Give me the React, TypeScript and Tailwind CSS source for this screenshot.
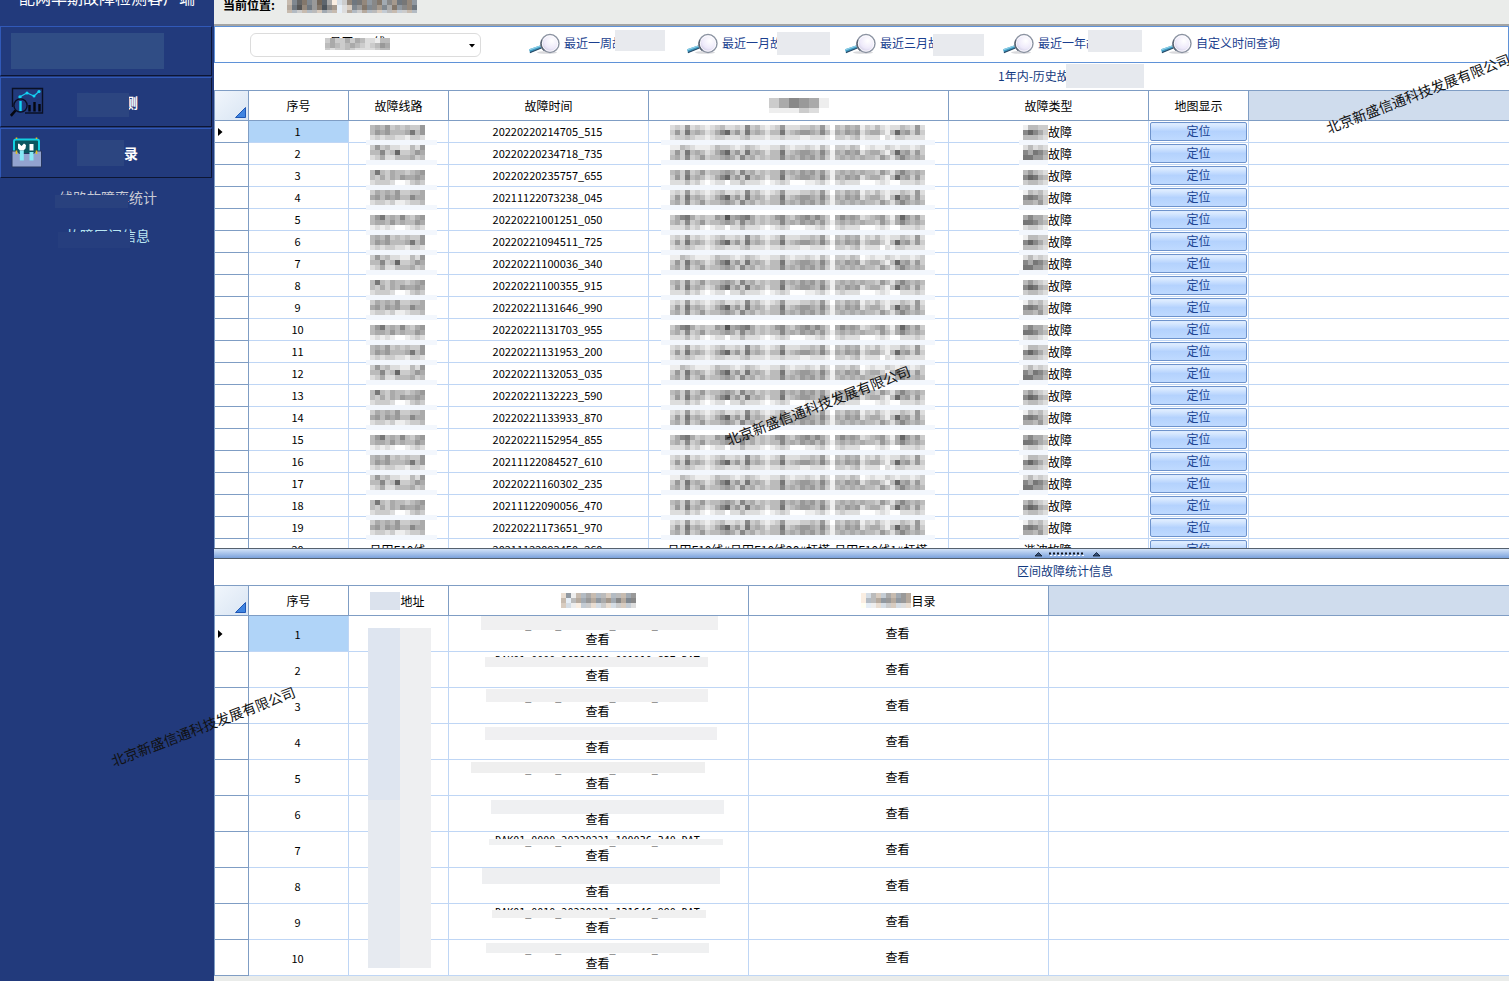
import React from "react";

/* ---------- pixelated redaction blocks ---------- */

type MosaicProps = {
  rows: string[];
  top?: number;
  height?: number;
  tint?: boolean;
  band?: [number, number];
};

function shade(level: number, col: number, tint?: boolean) {
  const v = level * 17;
  if (!tint) return `rgb(${v},${v},${v})`;
  const warm = col % 3 === 0 ? 12 : col % 3 === 1 ? -8 : 0;
  return `rgb(${Math.min(255, v + warm)},${v},${Math.min(255, v - warm)})`;
}

function Mosaic({ rows, top = 0, height = 15, tint, band }: MosaicProps) {
  const width = rows[0].length * 5;
  return (
    <svg
      width={width}
      height={height}
      className={band ? "block shrink-0 overflow-visible" : "block shrink-0 overflow-hidden"}
      shapeRendering="crispEdges"
      aria-hidden="true"
    >
      {band && <rect x={band[0]} y={top + 15} width={band[1]} height={5} fill="#f3f7fd" />}
      {rows.map((row, r) =>
        row.split("").map((c, i) => (
          <rect key={`${r}-${i}`} x={i * 5} y={top + r * 5} width={5} height={5} fill={shade(parseInt(c, 16), i, tint)} />
        ))
      )}
    </svg>
  );
}

const wideA = "dcd9dcdedcbddcd8cbdedc9dddccbc9dfbcabaecdbdeddbcd9d";
const wideB = "c9c7babdca86b9c7babdbb7cba99ab8beab9a9dbaaceb6a9c9c";
const wideC = "dccbcddedccdddcbdddeddcdddeedddefccdcbedddfdeccdddd";
const wideD = "eebcdeeedbccdedbcdeeddbdeddcdebdfccdbcfedeecdeddedc";
const wideE = "bac8cb9cbba9ac8bacbcbb8bab9a9b9cebabababbc9bda8abab";
const wideF = "dddbdcefeddfddbdddefedcdfffeedcefdcdddfffedeffdddcd";
const wideG = "ca87acbcc9a5a987acbcb98bca98a8acfa8a9adcba9cea69b9c";

const wideVariants = [
  [wideA, wideB, wideC],
  [wideD, wideB, wideE],
  [wideE, wideB, wideF],
  [wideA, wideB, wideE],
  [wideG, wideE, wideF],
];

const lineVariants = [
  ["bab9cbcbcc9", "b9a9bbba7b9", "dcdccddeccd"],
  ["c9cbddeebd9", "bb8cb6ccb9a", "dcaddbbbacb"],
  ["b7bcabbcba9", "bcacab9aa9a", "dcccdffecbc"],
  ["cabab9ccbba", "a9b9a9bb8aa", "dccdceedccb"],
  ["b97bab8bca9", "baab9babb9a", "ededeffedcd"],
];

const typeVariants = [
  ["ebbcc", "868ac", "bbbcd"],
  ["dbdcd", "8a78a", "7799b"],
  ["b9bcd", "867ab", "cbbcd"],
  ["ebcbd", "878ac", "aab9c"],
  ["a8aac", "778ab", "dccde"],
];

/* ---------- icons ---------- */

function Magnifier() {
  return (
    <svg width="31" height="21" viewBox="0 0 31 21" aria-hidden="true">
      <defs>
        <radialGradient id="lens" cx="0.6" cy="0.35" r="0.7">
          <stop offset="0" stopColor="#ffffff" />
          <stop offset="0.6" stopColor="#eeeafa" />
          <stop offset="1" stopColor="#c9c4de" />
        </radialGradient>
      </defs>
      <ellipse cx="18" cy="19.4" rx="10" ry="1.4" fill="#d9d9dc" />
      <path d="M0 16.2 L11 12.500 L12.500 15 L1 19.8 Z" fill="#3f9cc4" />
      <path d="M0 16.2 L11 12.500 L11.600 13.500 L0.500 17.500 Z" fill="#8fd0e8" />
      <path d="M0.800 19 L12.300 14.600 L12.500 15.400 L1 20.200 Z" fill="#2a4a66" />
      <path d="M11 12.500 L14 11.400 L15 13.600 L12.500 15 Z" fill="#b9c2cc" />
      <circle cx="21" cy="10.5" r="9" fill="url(#lens)" stroke="#8b93a1" strokeWidth="1.4" />
      <path d="M13 7 A9 9 0 0 0 15.400 17.500" fill="none" stroke="#5b6675" strokeWidth="1.6" />
      <circle cx="21" cy="10.5" r="7.7" fill="none" stroke="#ffffff" strokeWidth="0.8" />
    </svg>
  );
}

function ChartIcon() {
  return (
    <svg width="34" height="30" viewBox="0 0 34 30" fill="none" aria-hidden="true">
      <path d="M2.5 20 V1.5 H32.5 V26 H15" stroke="#0a1024" strokeWidth="1.4" />
      <path d="M9.5 10 L17 6 L24 9 L29.5 4" stroke="#17c8ee" strokeWidth="1.2" />
      <circle cx="10" cy="10" r="1.7" fill="#12d4f5" />
      <circle cx="17" cy="6" r="1.5" fill="#12d4f5" />
      <circle cx="24" cy="9" r="1.5" fill="#12d4f5" />
      <circle cx="29" cy="4.5" r="1.6" fill="#12d4f5" />
      <path d="M10.5 14 V24" stroke="#12d4f5" strokeWidth="2.4" />
      <circle cx="10.5" cy="18.5" r="6.6" stroke="#0a1024" strokeWidth="1.4" />
      <path d="M5.5 23.5 L0.8 28.8" stroke="#05070f" strokeWidth="2.6" />
      <path d="M19.5 18 V24.5 M24.5 15 V24.5 M29.5 17 V24.5" stroke="#05070f" strokeWidth="2.4" />
    </svg>
  );
}

function ToolboxIcon() {
  return (
    <svg width="32" height="32" viewBox="0 0 32 32" aria-hidden="true">
      <rect x="3" y="2.5" width="25" height="16" rx="2" fill="#0b5560" stroke="#12d0e0" strokeWidth="2" />
      <path d="M1 14 H6 L8 16.500 H23 L25 14 H30.5 V30 H1 Z" fill="#93a3cf" stroke="#26365f" strokeWidth="1" />
      <path d="M7 7 L8 6.500 L10.500 9 L13 6.500 L15 8 L14.500 11.500 L12.500 13.500 H9 L7 11.500 Z" fill="#ffffff" />
      <rect x="18.500" y="7" width="4" height="6.500" fill="#ffffff" />
      <path d="M10.800 13.500 V23.500 M20.500 15 V23.500" stroke="#86e8f6" strokeWidth="4" />
      <path d="M5.500 0.500 V2 M25.500 0.500 V2 M5.500 13.500 V17 M25.500 13.500 V17" stroke="#e0c020" strokeWidth="1.600" />
    </svg>
  );
}

function RowMarker() {
  return (
    <svg width="5" height="8" className="ml-[3px] block" aria-hidden="true">
      <path d="M0 0 L4.500 4 L0 8 Z" fill="#000" />
    </svg>
  );
}

/* ---------- grid pieces ---------- */

function HeadCell({ children }: { children?: React.ReactNode }) {
  return (
    <th className="h-[31px] border-y border-r border-[#7f9dc4] bg-white p-0 font-normal">
      <div className="flex items-center justify-center">{children}</div>
    </th>
  );
}

function CornerCell() {
  return (
    <td className="h-[31px] border border-[#7f9dc4] bg-linear-to-br from-[#f1f6fc] to-[#d9e5f3] p-0 align-bottom">
      <svg width="11" height="11" className="mr-[2px] mb-[2px] ml-auto block" aria-hidden="true">
        <path d="M10.500 0.500 V10.500 H0.500 Z" fill="#3f84e0" stroke="#1f57b5" />
      </svg>
    </td>
  );
}

const gutter = "border-x border-b border-[#7f9dc4] p-0";
const cell = "border-r border-b border-[#bfd6f5] p-0 pr-0.5";
const tail = "border-b border-[#bfd6f5] p-0";

const times = [
  "20220220214705_515", "20220220234718_735", "20220220235757_655", "20211122073238_045",
  "20220221001251_050", "20220221094511_725", "20220221100036_340", "20220221100355_915",
  "20220221131646_990", "20220221131703_955", "20220221131953_200", "20220221132053_035",
  "20220221132223_590", "20220221133933_870", "20220221152954_855", "20211122084527_610",
  "20220221160302_235", "20211122090056_470", "20220221173651_970", "20211122093450_260",
];

function HistoryTable() {
  return (
    <table className="w-full table-fixed border-separate border-spacing-0 text-center">
      <colgroup>
        <col className="w-[35px]" />
        <col className="w-[100px]" />
        <col className="w-[100px]" />
        <col className="w-[200px]" />
        <col className="w-[300px]" />
        <col className="w-[200px]" />
        <col className="w-[100px]" />
        <col />
      </colgroup>
      <thead>
        <tr>
          <CornerCell />
          <HeadCell>序号</HeadCell>
          <HeadCell>故障线路</HeadCell>
          <HeadCell>故障时间</HeadCell>
          <HeadCell>
            <Mosaic rows={["ccaa8899aaee", "ccaa8899aaee", "eeeeeeccddff"]} />
          </HeadCell>
          <HeadCell>故障类型</HeadCell>
          <HeadCell>地图显示</HeadCell>
          <td className="border-y border-[#7f9dc4] bg-[#cfdced] p-0" />
        </tr>
      </thead>
      <tbody>
        {times.map((time, i) => {
          const masked = i < 19;
          const top = Math.round((125 + 22 * i) / 5) * 5 - (121 + 22 * i);
          const v = i % 5;
          return (
            <tr key={time} className="h-[22px]">
              <td className={gutter}>{i === 0 && <RowMarker />}</td>
              <td className={i === 0 ? `${cell} bg-[#b0d4f8]` : cell}>
                <span className="block text-[11px] leading-[21px]">{i + 1}</span>
              </td>
              <td className={cell}>
                <div className="flex h-[21px] items-start justify-center leading-[21px]">
                  {masked ? <Mosaic rows={lineVariants[v]} top={top} height={21} band={[-4, 71]} /> : "吕田F10线"}
                </div>
              </td>
              <td className={cell}>
                <span className="block text-[11px] leading-[21px]">{time}</span>
              </td>
              <td className={cell}>
                <div className="flex h-[21px] items-start justify-center leading-[21px] whitespace-nowrap">
                  {masked ? (
                    <Mosaic rows={wideVariants[v]} top={top} height={21} band={[-9, 274]} />
                  ) : (
                    "吕田F10线#吕田F10线20#杆塔-吕田F10线1#杆塔"
                  )}
                </div>
              </td>
              <td className={cell}>
                <div className="flex h-[21px] items-start justify-center leading-[22px]">
                  {masked ? (
                    <>
                      <Mosaic rows={typeVariants[v]} top={top} height={21} band={[-4, 29]} />
                      故障
                    </>
                  ) : (
                    "谐波故障"
                  )}
                </div>
              </td>
              <td className="border-r border-b border-[#bfd6f5] px-px py-0">
                <button
                  type="button"
                  className="block h-[19px] w-full rounded-[2px] border border-[#6e93cc] bg-linear-to-b from-[#dcebff] from-10% via-[#b4d2fd] via-50% to-[#bfdaff] pb-0.5 leading-[15px] text-[#1c4595]"
                >
                  定位
                </button>
              </td>
              <td className={tail} />
            </tr>
          );
        })}
      </tbody>
    </table>
  );
}

type Section = { code: string; mask: string };

const sections: Section[] = [
  { code: "DAK01_0000_20220220_214705_515.DAT", mask: "left-[32px] top-0 w-[237px] h-[14px] bg-[#f0f0f1]" },
  { code: "DAK01_0000_20220220_001010_837.DAT", mask: "left-[36px] top-[5px] w-[223px] h-[10px] bg-[#f0f0f1]" },
  { code: "DAK01_0000_20220220_235757_655.DAT", mask: "left-[37px] top-px w-[222px] h-[13px] bg-[#f0f0f1]" },
  { code: "DAK01_0000_20211122_073238_045.DAT", mask: "left-[36px] top-[3px] w-[232px] h-[13px] bg-[#f0f0f2]" },
  { code: "DAK01_0000_20220221_001251_050.DAT", mask: "left-[22px] top-[2px] w-[234px] h-[11px] bg-[#efefef]" },
  { code: "DAK01_0000_20220221_094511_725.DAT", mask: "left-[42px] top-[4px] w-[233px] h-[14px] bg-[#eff0f2]" },
  { code: "DAK01_0000_20220221_100036_340.DAT", mask: "left-[40px] top-[7px] w-[234px] h-[6px] bg-[#f0f1f2]" },
  { code: "DAK01_0000_20220221_100355_915.DAT", mask: "left-[33px] top-0 w-[238px] h-[16px] bg-[#eeeff1]" },
  { code: "DAK01_0010_20220221_131646_990.DAT", mask: "left-[43px] top-[6px] w-[214px] h-[8px] bg-[#f0f0f0]" },
  { code: "DAK01_0000_20220221_131703_955.DAT", mask: "left-[37px] top-[3px] w-[223px] h-[10px] bg-[#eff0f1]" },
];

function SectionTable() {
  return (
    <div className="relative">
      <table className="w-full table-fixed border-separate border-spacing-0 text-center">
        <colgroup>
          <col className="w-[35px]" />
          <col className="w-[100px]" />
          <col className="w-[100px]" />
          <col className="w-[300px]" />
          <col className="w-[300px]" />
          <col />
        </colgroup>
        <thead>
          <tr>
            <CornerCell />
            <HeadCell>序号</HeadCell>
            <HeadCell>
              <span className="flex items-center pr-0.5">
                <span className="h-[18px] w-[30px] bg-[#dbe2ed]" />
                地址
              </span>
            </HeadCell>
            <HeadCell>
              <Mosaic tint rows={["d9ebbabbbcbbba9", "bebaa9a9a9a8a88", "cdeeccddcddcccd"]} />
            </HeadCell>
            <HeadCell>
              <Mosaic tint rows={["edbccaba9a", "ebba99a99a", "feeddccddd"]} />
              目录
            </HeadCell>
            <td className="border-y border-[#7f9dc4] bg-[#cfdced] p-0" />
          </tr>
        </thead>
        <tbody>
          {sections.map((s, i) => (
            <tr key={s.code} className="h-[36px]">
              <td className={gutter}>{i === 0 && <RowMarker />}</td>
              <td className={i === 0 ? `${cell} bg-[#b0d4f8]` : cell}>
                <span className="block text-[11px]">{i + 1}</span>
              </td>
              <td className={cell} />
              <td className={cell}>
                <div className="relative h-[35px] pt-[3px]">
                  <div className="font-['DejaVu_Sans_Mono',monospace] text-[10px] leading-[12px]">{s.code}</div>
                  <div className={`absolute ${s.mask}`} />
                  <a href="#wave" className="relative block leading-[16px]">查看</a>
                </div>
              </td>
              <td className={cell}>
                <a href="#dir" className="block pb-0.5">查看</a>
              </td>
              <td className={tail} />
            </tr>
          ))}
        </tbody>
      </table>
      <div className="absolute top-[43px] left-[154px] grid w-[63px] grid-cols-2 bg-[#eeeff1]">
        <div className="h-[172px] bg-[#dee5f0]" />
        <div />
        <div className="h-[168px] bg-[#e6eaf0]" />
        <div />
      </div>
    </div>
  );
}

/* ---------- toolbar ---------- */

const ranges = [
  { label: "最近一周故障", mask: "left-[86px] top-[-3px] w-[50px] h-[21px]" },
  { label: "最近一月故障", mask: "left-[90px] top-[-1px] w-[53px] h-[23px]" },
  { label: "最近三月故障", mask: "left-[88px] top-px w-[51px] h-[22px]" },
  { label: "最近一年故障", mask: "left-[85px] top-[-3px] w-[54px] h-[22px]" },
  { label: "自定义时间查询", mask: "" },
];

function Toolbar() {
  return (
    <div className="flex h-[37px] shrink-0 items-center border border-[#5f92d8] bg-white pl-[35px]">
      <div className="relative w-[231px]">
        <select
          aria-label="线路"
          className="block h-[24px] w-full appearance-none rounded-[6px] border border-[#dcdcdc] bg-white pr-4 pb-1.5 text-center text-[12px] leading-[16px]"
        >
          <option>吕田F10线</option>
        </select>
        <div className="pointer-events-none absolute top-[5px] left-[75px]">
          <Mosaic rows={["caccacabddebb", "babcbabcdcb9a", "cdccbcddddcbb"]} height={12} />
        </div>
        <svg width="6" height="4" className="pointer-events-none absolute top-[11px] right-[6px]" aria-hidden="true">
          <path d="M0 0 H6 L3 3.500 Z" fill="#000" />
        </svg>
      </div>
      <div className="mb-0.5 ml-12 flex">
        {ranges.map((r) => (
          <button
            key={r.label}
            type="button"
            className="relative flex w-[158px] items-center gap-1 whitespace-nowrap text-[#1b3f8f]"
          >
            <Magnifier />
            <span className="pb-0.5">{r.label}</span>
            {r.mask && <span className={`absolute bg-[#e8eaee] ${r.mask}`} />}
          </button>
        ))}
      </div>
    </div>
  );
}

function Splitter() {
  return (
    <div className="flex h-[11px] shrink-0 items-center border-y border-[#55616e] bg-linear-to-b from-[#d3e3f8] to-[#7ba2dc] pl-[821px]">
      <svg width="66" height="6" viewBox="0 0 66 6" aria-hidden="true">
        <path d="M0 5 L3.500 1.500 L7 5 Z M58 5 L61.500 1.500 L65 5 Z" fill="#33507c" stroke="#0b1422" strokeWidth="0.8" />
        <path d="M14 2.500 H49" stroke="#10151d" strokeWidth="2" strokeDasharray="2 2" />
        <path d="M15 4.500 H50" stroke="#ffffff" strokeWidth="1" strokeDasharray="2 2" />
      </svg>
    </div>
  );
}

/* ---------- sidebar ---------- */

const navBox =
  "relative flex h-[50px] w-[212px] items-center border border-t-[#3159b8] border-r-[#0d1634] border-b-[#0d1634] border-l-[#3159b8] pl-[9px] text-left";

function Sidebar() {
  return (
    <nav className="w-[214px] shrink-0 overflow-hidden bg-[#223a7c] text-[14px] text-white">
      <div className="h-[26px] overflow-hidden">
        <h1 className="-mt-3 text-center text-[16px] leading-[18px] font-normal">配网早期故障检测客户端</h1>
      </div>
      <div className="flex flex-col gap-px">
        <div className={navBox}>
          <div className="ml-px h-[36px] w-[153px] bg-[#304d85]" />
        </div>
        <button type="button" className={navBox}>
          <ChartIcon />
          <span className="ml-[38px] font-bold">故障监测</span>
          <span className="absolute top-[15px] left-[76px] h-[24px] w-[52px] bg-[#2c4580]" />
        </button>
        <button type="button" className={navBox}>
          <span className="pl-px">
            <ToolboxIcon />
          </span>
          <span className="ml-[39px] font-bold">故障记录</span>
          <span className="absolute top-[11px] left-[76px] h-[26px] w-[47px] bg-[#2c4580]" />
        </button>
      </div>
      <div className="flex flex-col items-center pl-0.5 leading-[38px]">
        <a href="#rate" className="relative text-[#c8cad4]">
          线路故障率统计
          <span className="absolute top-[17px] left-[-4px] h-[13px] w-[73px] bg-[#29417e]" />
        </a>
        <a href="#section" className="relative text-[#b9e6f2]">
          故障区间信息
          <span className="absolute top-[16px] left-[-8px] h-[16px] w-[72px] bg-[#263e7e]" />
        </a>
      </div>
    </nav>
  );
}

function Watermark({ place }: { place: string }) {
  return (
    <div
      aria-hidden="true"
      className={`pointer-events-none absolute -rotate-[21deg] text-[14px] leading-[20px] whitespace-nowrap text-[#111] ${place}`}
    >
      北京新盛信通科技发展有限公司
    </div>
  );
}

export default function App() {
  return (
    <div className="relative flex h-screen overflow-hidden bg-white font-['Noto_Sans_CJK_SC',sans-serif] text-[12px] leading-[16px] text-black">
      <Sidebar />
      <main className="flex min-w-0 flex-1 flex-col">
        <header className="flex h-[26px] shrink-0 items-start gap-3 overflow-hidden border-b-2 border-[#a3a4a3] bg-[#eaecea] pl-[9px]">
          <span className="-mt-[3px] font-bold">当前位置:</span>
          <Mosaic
            tint
            height={13}
            rows={["b8678966aedc8778987a897789", "a758797589edc8978898a79887", "bbcbbbcabbedabcabbccbbccbb"]}
          />
        </header>
        <Toolbar />
        <section className="min-h-0 flex-1 overflow-hidden">
          <h2 className="relative h-[27px] pl-[784px] leading-[25px] whitespace-nowrap text-[#133a80]">
            1年内-历史故障
            <span className="absolute top-px left-[852px] h-[24px] w-[78px] bg-[#e6e9ee]" />
          </h2>
          <HistoryTable />
        </section>
        <Splitter />
        <section className="shrink-0">
          <h2 className="h-[26px] pl-[803px] leading-[24px] whitespace-nowrap text-[#133a80]">区间故障统计信息</h2>
          <SectionTable />
        </section>
        <footer className="h-[5px] shrink-0 bg-[#eaecea]" />
      </main>
      <Watermark place="left-[720px] top-[395px]" />
      <Watermark place="left-[105px] top-[716px]" />
      <Watermark place="left-[1320px] top-[83px]" />
    </div>
  );
}
